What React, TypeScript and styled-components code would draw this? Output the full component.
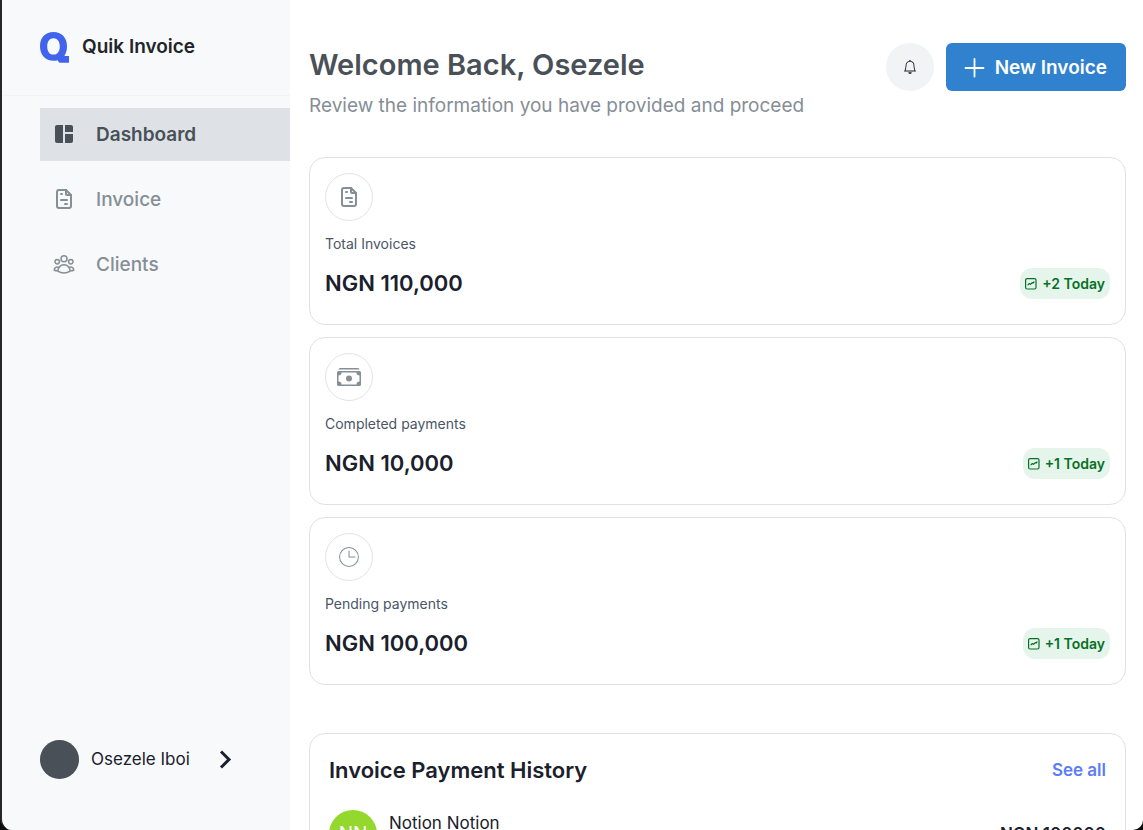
import React from "react";
import styled, { createGlobalStyle } from "styled-components";
import { BsBell, BsCashStack } from "react-icons/bs";
import { CiClock2 } from "react-icons/ci";
import { HiOutlineUserGroup } from "react-icons/hi2";
import { MdSpaceDashboard } from "react-icons/md";
import { TbFileInvoice } from "react-icons/tb";

const Global = createGlobalStyle`
  *, *::before, *::after { box-sizing: border-box; }
  body {
    margin: 0;
    background: #0b0b0b;
    color: #1a202c;
    font-family: Inter, "Liberation Sans", sans-serif;
    font-size: 16px;
    line-height: 24px;
  }
  h1, h2, p, ul { margin: 0; padding: 0; }
  ul { list-style: none; }
  a { color: inherit; text-decoration: none; }
  button { font: inherit; border: 0; cursor: pointer; }
  svg { display: block; flex: none; }
`;

const Shell = styled.div`
  display: flex;
  height: 100vh;
  overflow: hidden;
  background: #fff;
  border-left: 2px solid #26262b;
  border-radius: 0 0 10px 12px;
`;

const Sidebar = styled.aside`
  display: flex;
  flex-direction: column;
  flex: none;
  width: 288px;
  background: #f8f9fb;
`;

const Brand = styled.a`
  display: flex;
  align-items: center;
  gap: 12px;
  height: 96px;
  padding: 0 38px 2px;
  border-bottom: 1px solid #f1f3f5;
  color: #212529;
  font-size: 19px;
  font-weight: 600;
`;

const Nav = styled.nav`
  flex: 1;
  padding: 12px 0 0 38px;
`;

const NavList = styled.ul`
  display: flex;
  flex-direction: column;
  gap: 12px;
`;

const NavLink = styled.a<{ $active?: boolean }>`
  display: flex;
  align-items: center;
  gap: 20px;
  height: 53px;
  padding-left: 12px;
  background: ${(p) => (p.$active ? "#dee2e6" : "transparent")};
  color: ${(p) => (p.$active ? "#495057" : "#868e96")};
  font-size: 19px;
  font-weight: ${(p) => (p.$active ? 600 : 500)};

  svg { margin-bottom: 1px; }
`;

const Account = styled.button`
  display: flex;
  align-items: center;
  gap: 12px;
  padding: 0 0 51px 38px;
  background: none;
  color: #1a202c;
  font-size: 17px;
  text-align: left;
`;

const AccountPhoto = styled.span`
  width: 39px;
  height: 39px;
  border-radius: 50%;
  background: #495057;
`;

const AccountName = styled.span`
  margin-right: 11px;
  padding-bottom: 1px;
`;

const Main = styled.main`
  flex: 1;
  min-width: 0;
  padding: 43px 17px 0 19px;
`;

const Header = styled.header`
  display: flex;
  justify-content: space-between;
  align-items: flex-start;
  margin-bottom: 35px;
`;

const Title = styled.h1`
  color: #495057;
  font-size: 29px;
  line-height: 44px;
  font-weight: 600;
`;

const Subtitle = styled.p`
  margin-top: 3px;
  color: #868e96;
  font-size: 19px;
  line-height: 32px;
`;

const Actions = styled.div`
  display: flex;
  gap: 12px;
`;

const BellButton = styled.button`
  display: grid;
  place-items: center;
  width: 48px;
  height: 48px;
  border-radius: 50%;
  background: #f1f3f5;
  color: #1a202c;
`;

const NewButton = styled.button`
  display: flex;
  align-items: center;
  gap: 10px;
  height: 48px;
  padding: 1px 19px 0 18px;
  border-radius: 6px;
  background: #3182ce;
  color: #fff;
  font-size: 19px;
  font-weight: 600;
`;

const Stats = styled.section`
  display: grid;
  gap: 12px;
  margin-bottom: 48px;
`;

const Card = styled.article`
  padding: 15px;
  height: 168px;
  border: 1px solid #dee2e6;
  border-radius: 16px;
`;

const CardIcon = styled.div`
  display: grid;
  place-items: center;
  width: 48px;
  height: 48px;
  margin-bottom: 11px;
  border: 1px solid #e2e4ea;
  border-radius: 50%;
  color: #868e96;
`;

const CardLabel = styled.p`
  color: #4a5568;
  font-size: 14px;
`;

const CardRow = styled.div`
  display: flex;
  justify-content: space-between;
  align-items: center;
  margin-top: 12px;
`;

const Amount = styled.p`
  font-size: 22px;
  font-weight: 600;
  line-height: 31px;
`;

const Badge = styled.span`
  display: flex;
  align-items: center;
  gap: 5px;
  height: 31px;
  padding: 0 5px;
  border-radius: 12px;
  background: #e6f5eb;
  color: #087026;
  font-size: 14px;
  font-weight: 600;
`;

const History = styled.section`
  padding: 20px 19px;
  border: 1px solid #dee2e6;
  border-radius: 16px;
`;

const HistoryHead = styled.div`
  display: flex;
  justify-content: space-between;
  align-items: center;
  margin-bottom: 24px;
`;

const HistoryTitle = styled.h2`
  font-size: 22px;
  line-height: 32px;
  font-weight: 600;
`;

const SeeAll = styled.a`
  color: #5c7cfa;
  font-size: 17px;
  font-weight: 600;
`;

const Payment = styled.div`
  display: flex;
  gap: 12px;
`;

const PaymentAvatar = styled.span`
  display: grid;
  place-items: center;
  width: 48px;
  height: 48px;
  border-radius: 50%;
  background: #94d82d;
  color: #fff;
  font-size: 19px;
`;

const PaymentName = styled.p`
  flex: 1;
  font-size: 17px;
  line-height: 26px;
`;

const PaymentAmount = styled.p`
  font-size: 17px;
  line-height: 48px;
  font-weight: 600;
`;

const Logo = () => (
  <svg width="30" height="32" viewBox="0 0 30 32" fill="#4263eb" aria-hidden="true">
    <path
      fillRule="evenodd"
      d="M13.500 1C21.500 1 27 6.500 27 15.200c0 3.800-.9 7-2.600 9.800H29v6.800h-8.300c-1.500 0-2.300-1-3-2.600-1.200.4-2.600.6-4.200.6C5.500 29.800 0 24 0 15.200S5.500 1 13.500 1Zm0 6.200C9.700 7.200 7.200 10.300 7.200 15.400s2.500 8.200 6.300 8.200 6.300-3.100 6.300-8.200-2.500-8.200-6.300-8.200Z"
    />
  </svg>
);

const TrendIcon = () => (
  <svg width="12" height="12" viewBox="0 0 12 12" fill="none" stroke="currentColor" strokeWidth="1.200" strokeLinejoin="round" strokeLinecap="round" aria-hidden="true">
    <rect x="0.600" y="0.600" width="10.400" height="10.400" rx="1.500" />
    <path d="M3 6.800 4.300 5.500l1.300.8L7.200 4.600l.8.500L9 4" />
  </svg>
);

const PlusIcon = () => (
  <svg width="21" height="20" viewBox="0 0 21 20" stroke="currentColor" strokeWidth="1.800" strokeLinecap="round" aria-hidden="true">
    <path d="M10.500 1v17.500M1.500 10h18" />
  </svg>
);

const ChevronIcon = () => (
  <svg width="24" height="24" viewBox="0 0 24 24" fill="none" stroke="currentColor" strokeWidth="3" aria-hidden="true">
    <path d="m8 3.500 8 8-8 8" />
  </svg>
);

const navItems = [
  { label: "Dashboard", icon: <MdSpaceDashboard size={24} />, active: true },
  { label: "Invoice", icon: <TbFileInvoice size={24} /> },
  { label: "Clients", icon: <HiOutlineUserGroup size={24} /> },
];

const stats = [
  { label: "Total Invoices", amount: "NGN 110,000", change: "+2 Today", icon: <TbFileInvoice size={24} /> },
  { label: "Completed payments", amount: "NGN 10,000", change: "+1 Today", icon: <BsCashStack size={24} /> },
  { label: "Pending payments", amount: "NGN 100,000", change: "+1 Today", icon: <CiClock2 size={24} /> },
];

export default function App() {
  return (
    <>
      <Global />
      <Shell>
        <Sidebar>
          <Brand href="#">
            <Logo />
            Quik Invoice
          </Brand>
          <Nav>
            <NavList>
              {navItems.map((item) => (
                <li key={item.label}>
                  <NavLink href="#" $active={item.active}>
                    {item.icon}
                    {item.label}
                  </NavLink>
                </li>
              ))}
            </NavList>
          </Nav>
          <Account type="button">
            <AccountPhoto />
            <AccountName>Osezele Iboi</AccountName>
            <ChevronIcon />
          </Account>
        </Sidebar>
        <Main>
          <Header>
            <div>
              <Title>Welcome Back, Osezele</Title>
              <Subtitle>Review the information you have provided and proceed</Subtitle>
            </div>
            <Actions>
              <BellButton type="button" aria-label="Notifications">
                <BsBell size={14} />
              </BellButton>
              <NewButton type="button">
                <PlusIcon />
                New Invoice
              </NewButton>
            </Actions>
          </Header>
          <Stats>
            {stats.map((stat) => (
              <Card key={stat.label}>
                <CardIcon>{stat.icon}</CardIcon>
                <CardLabel>{stat.label}</CardLabel>
                <CardRow>
                  <Amount>{stat.amount}</Amount>
                  <Badge>
                    <TrendIcon />
                    {stat.change}
                  </Badge>
                </CardRow>
              </Card>
            ))}
          </Stats>
          <History>
            <HistoryHead>
              <HistoryTitle>Invoice Payment History</HistoryTitle>
              <SeeAll href="#">See all</SeeAll>
            </HistoryHead>
            <Payment>
              <PaymentAvatar>NN</PaymentAvatar>
              <PaymentName>Notion Notion</PaymentName>
              <PaymentAmount>NGN 100000</PaymentAmount>
            </Payment>
          </History>
        </Main>
      </Shell>
    </>
  );
}
